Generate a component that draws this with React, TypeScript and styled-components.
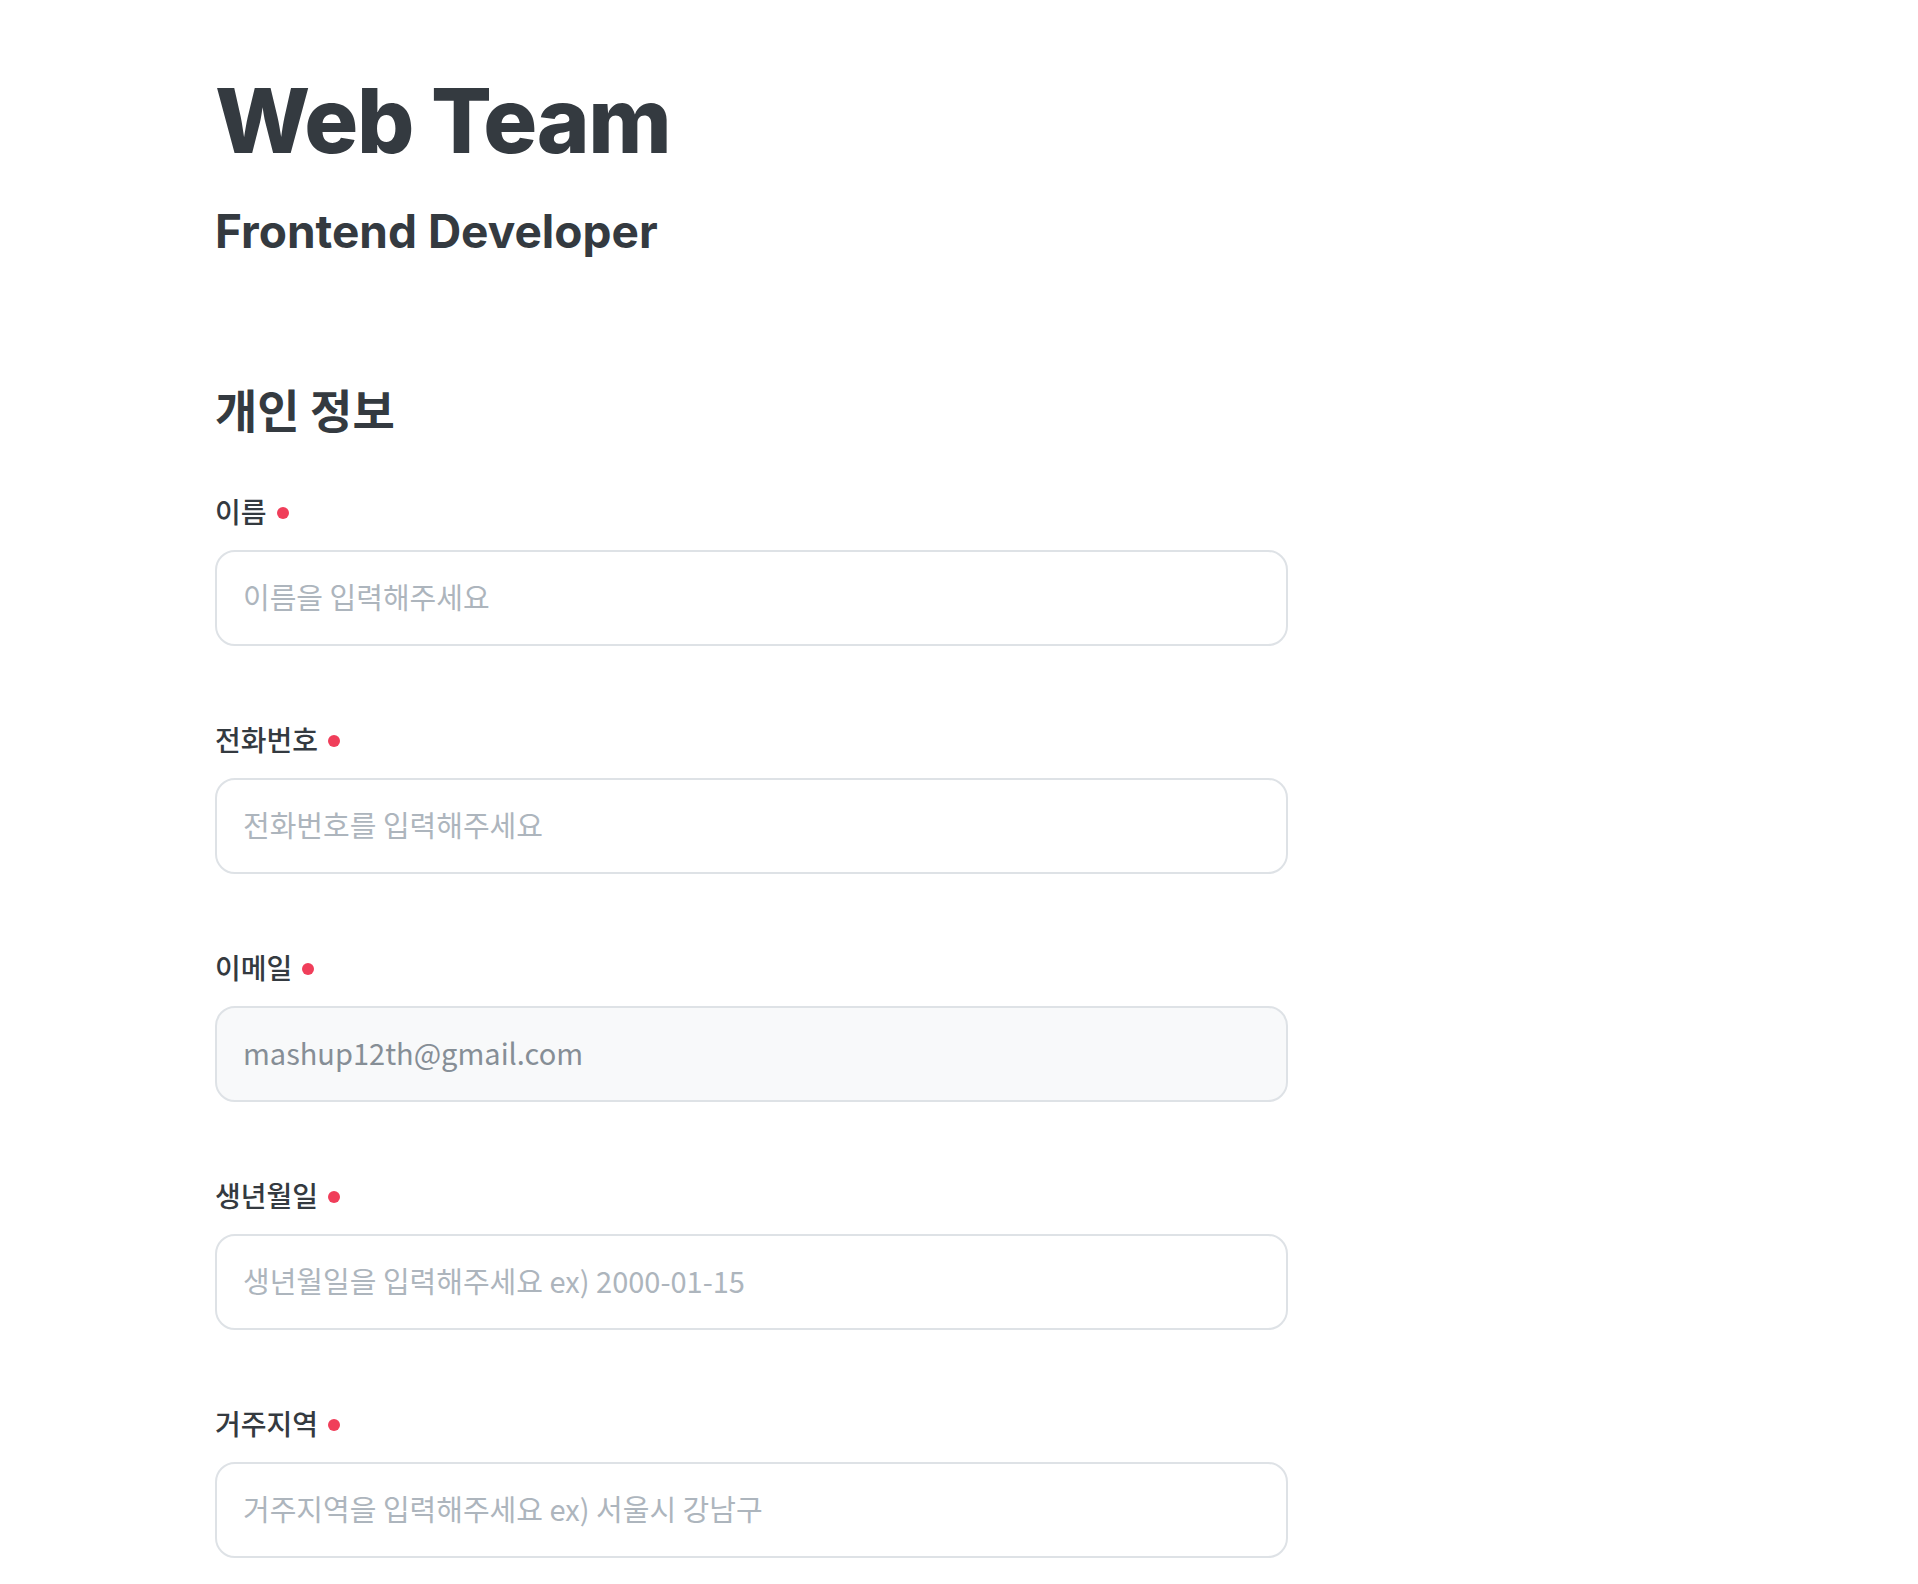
import styled, { createGlobalStyle } from "styled-components";

const GlobalStyle = createGlobalStyle`
  body {
    margin: 0;
    background: #ffffff;
  }
  * {
    box-sizing: border-box;
  }
`;

const Page = styled.div`
  padding: 67px 0 0 215px;
  font-family: "Noto Sans CJK KR", "Noto Sans", sans-serif;
  color: #343a40;
`;

const TeamTitle = styled.h1`
  margin: 0;
  font-family: Inter, "Noto Sans", sans-serif;
  font-size: 90px;
  font-weight: 800;
  line-height: 108px;
  letter-spacing: -1.5px;
`;

const Position = styled.h2`
  margin: 29px 0 0;
  font-family: Inter, "Noto Sans", sans-serif;
  font-size: 46px;
  font-weight: 700;
  line-height: 54px;
`;

const Section = styled.section`
  width: 1073px;
  margin-top: 120px;
`;

const SectionTitle = styled.h3`
  margin: 0 0 54px;
  font-size: 46px;
  font-weight: 700;
  line-height: 60px;
`;

const Fields = styled.div`
  display: flex;
  flex-direction: column;
  gap: 74px;
`;

const Field = styled.label`
  display: flex;
  flex-direction: column;
  gap: 20px;
`;

const LabelText = styled.span`
  display: flex;
  align-items: center;
  gap: 10px;
  font-size: 28px;
  font-weight: 500;
  line-height: 38px;
  color: #343a40;
`;

const RequiredDot = styled.span`
  width: 12px;
  height: 12px;
  border-radius: 50%;
  background: #f03e5a;
  margin-top: 4px;
`;

const Input = styled.input<{ $locked?: boolean }>`
  height: 96px;
  width: 100%;
  padding: 0 26px 5px;
  border: 2px solid #dee2e6;
  border-radius: 20px;
  background: ${(p) => (p.$locked ? "#f8f9fa" : "#ffffff")};
  color: ${(p) => (p.$locked ? "#868e96" : "#343a40")};
  font-family: "Noto Sans CJK KR", "Noto Sans", sans-serif;
  font-size: 29px;
  outline: none;

  &::placeholder {
    color: #adb5bd;
  }
`;

interface FieldData {
  label: string;
  placeholder: string;
  value?: string;
}

const fields: FieldData[] = [
  { label: "이름", placeholder: "이름을 입력해주세요" },
  { label: "전화번호", placeholder: "전화번호를 입력해주세요" },
  { label: "이메일", placeholder: "", value: "mashup12th@gmail.com" },
  { label: "생년월일", placeholder: "생년월일을 입력해주세요 ex) 2000-01-15" },
  { label: "거주지역", placeholder: "거주지역을 입력해주세요 ex) 서울시 강남구" },
];

function App() {
  return (
    <>
      <GlobalStyle />
      <Page>
        <TeamTitle>Web Team</TeamTitle>
        <Position>Frontend Developer</Position>
        <Section>
          <SectionTitle>개인 정보</SectionTitle>
          <Fields>
            {fields.map((f) => (
              <Field key={f.label}>
                <LabelText>
                  {f.label}
                  <RequiredDot />
                </LabelText>
                {f.value ? (
                  <Input $locked readOnly value={f.value} />
                ) : (
                  <Input placeholder={f.placeholder} />
                )}
              </Field>
            ))}
          </Fields>
        </Section>
      </Page>
    </>
  );
}

export default App;
